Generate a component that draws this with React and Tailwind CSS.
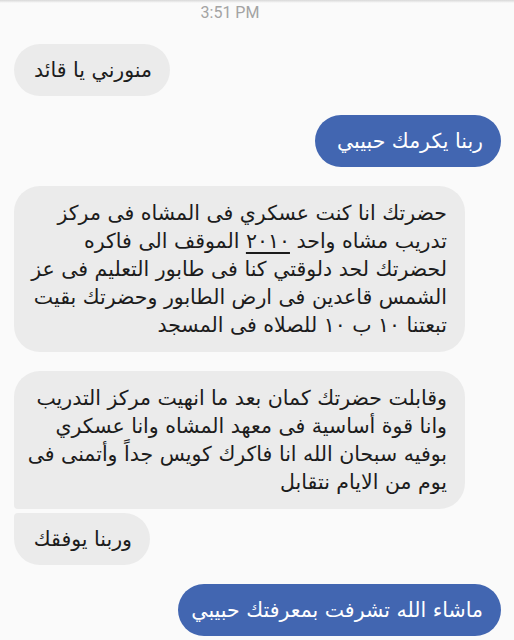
import React from 'react';

const arabic = "font-['DejaVu_Sans',sans-serif]";

// messages in the thread, lines are broken as in the phone screenshot
const messages = [
  { id: 1, mine: false, width: 'w-[156px]', lines: ['منورني يا قائد'] },
  { id: 2, mine: true, width: 'w-[186px]', lines: ['ربنا يكرمك حبيبي'] },
  {
    id: 3,
    mine: false,
    width: 'w-[451px]',
    lines: [
      'حضرتك انا كنت عسكري فى المشاه فى مركز',
      <>
        تدريب مشاه واحد <span className="underline underline-offset-4">٢٠١٠</span> الموقف الى فاكره
      </>,
      'لحضرتك لحد دلوقتي كنا فى طابور التعليم فى عز',
      'الشمس قاعدين فى ارض الطابور وحضرتك بقيت',
      'تبعتنا ١٠ ب ١٠ للصلاه فى المسجد',
    ],
  },
  {
    id: 4,
    mine: false,
    width: 'w-[451px]',
    corner: 'rounded-bl-[4px]',
    lines: [
      'وقابلت حضرتك كمان بعد ما انهيت مركز التدريب',
      'وانا قوة أساسية فى معهد المشاه وانا عسكري',
      'بوفيه سبحان الله انا فاكرك كويس جداً وأتمنى فى',
      'يوم من الايام نتقابل',
    ],
  },
  { id: 5, mine: false, width: 'w-[136px]', corner: 'rounded-tl-[4px]', gap: 'mt-[4px]', lines: ['وربنا يوفقك'] },
  { id: 6, mine: true, width: 'w-[323px]', lines: ['ماشاء الله تشرفت بمعرفتك حبيبي'] },
];

export default function App() {
  return (
    <div className="w-[514px] h-[640px] overflow-hidden bg-[#fafafa] relative">
      {/* status shadow on top edge */}
      <div className="h-[3px] bg-gradient-to-b from-[#d8d8d8] to-[#fafafa]" />
      <div className="flex justify-center pr-[54px] h-[20px] items-center">
        <span className="font-['Roboto',sans-serif] text-[16px] leading-none text-[#a3a3a3]">3:51 PM</span>
      </div>

      <div className="flex flex-col px-[13px] pt-[21px]">
        {messages.map((msg, i) => (
          <Bubble key={msg.id} msg={msg} first={i === 0} />
        ))}
      </div>
    </div>
  );
}

function Bubble({ msg, first }) {
  const spacing = first ? '' : msg.gap || 'mt-[19px]';
  const pad = msg.lines.length > 1 ? 'py-[13px]' : 'py-3';
  return (
    <div
      dir="rtl"
      className={`${spacing} ${msg.width} ${msg.mine ? 'self-end bg-[#4266b1] text-white' : 'self-start ml-[1px] bg-[#ebebeb] text-[#1c1c1c]'} rounded-[26px] ${msg.corner || ''} pl-[8px] pr-[18px] ${pad} ${arabic} text-[20.5px] leading-[28px]`}
    >
      {msg.lines.map((line, i) => (
        <div key={i} className="whitespace-nowrap text-right">
          {line}
        </div>
      ))}
    </div>
  );
}
